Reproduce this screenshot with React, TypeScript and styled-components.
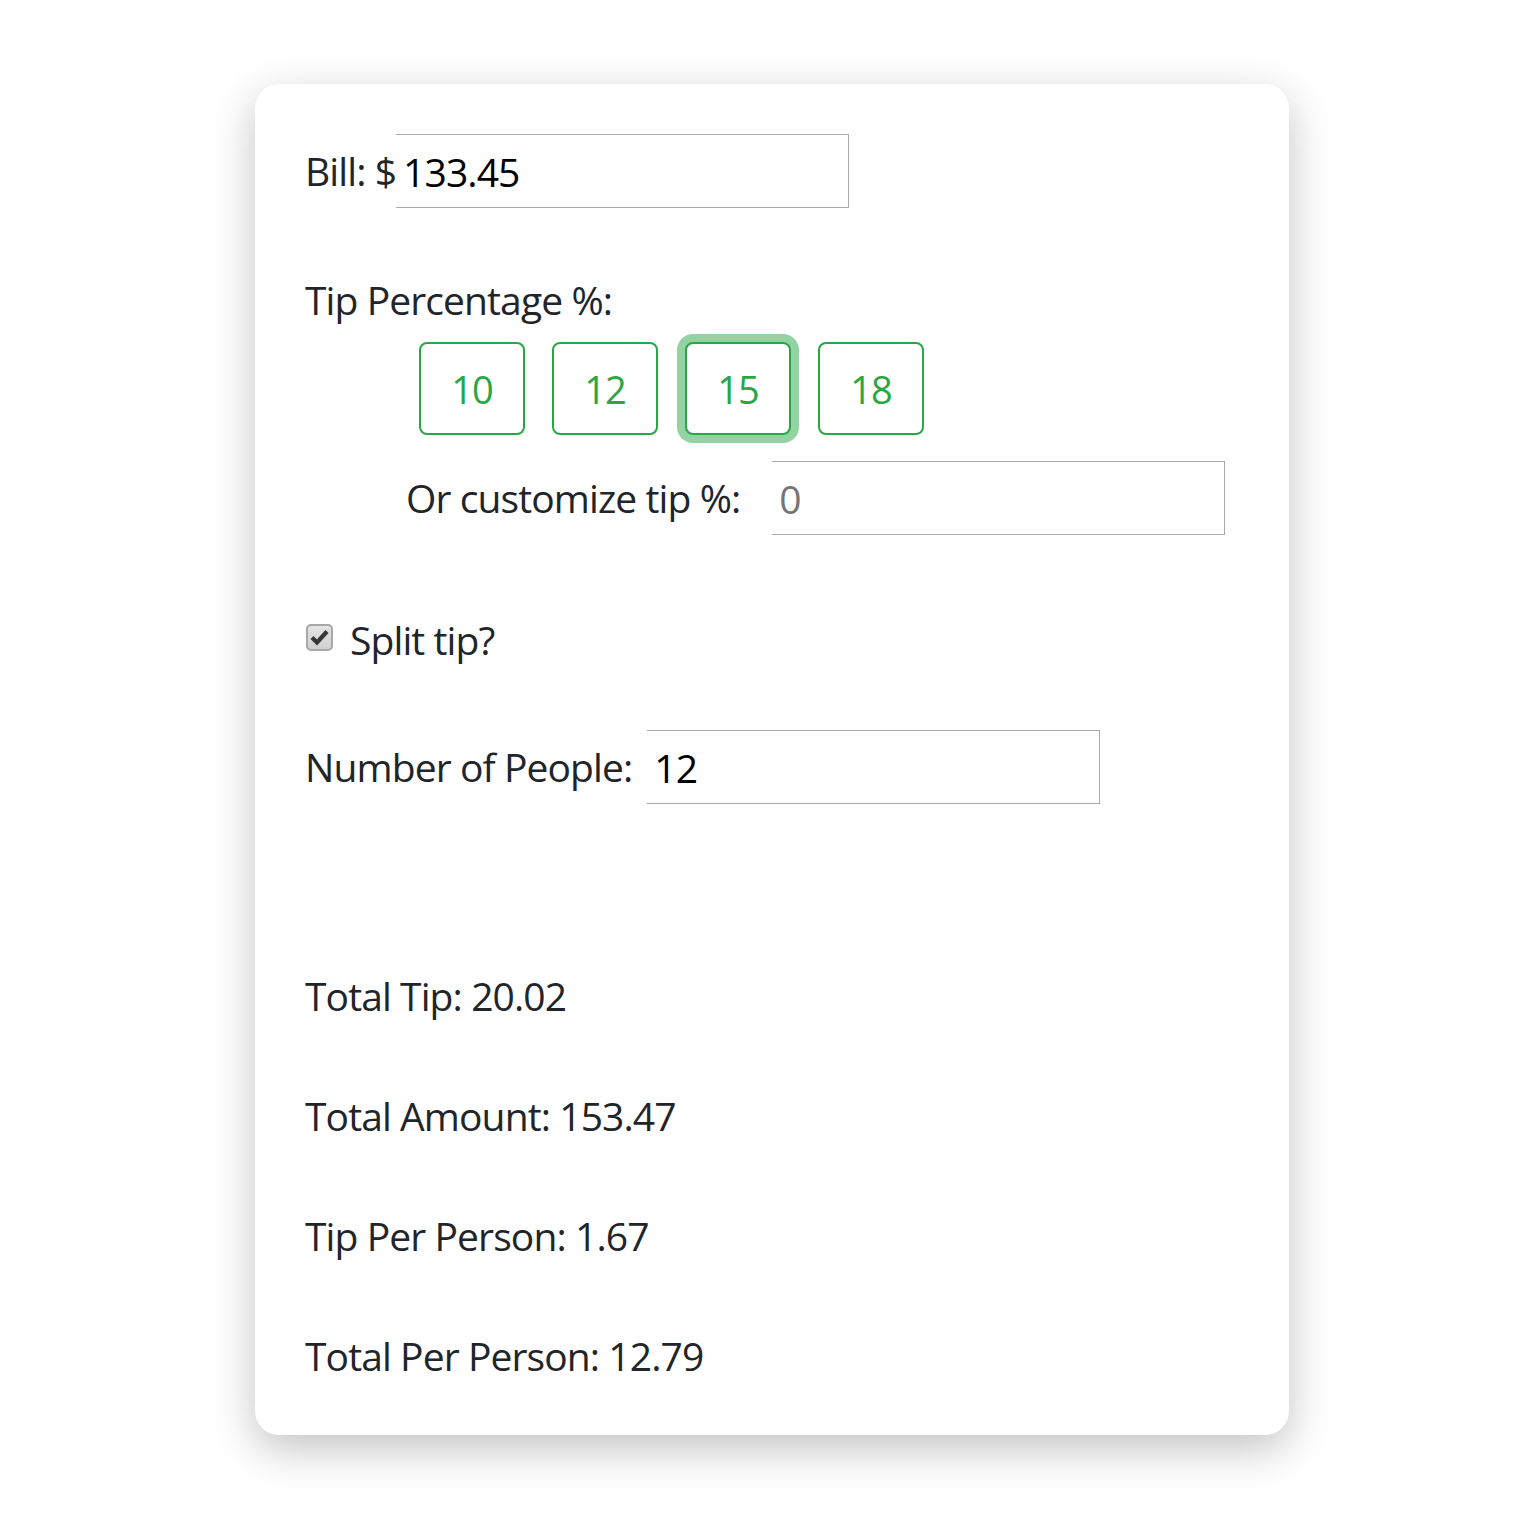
import React, { useState } from 'react';
import styled, { createGlobalStyle } from 'styled-components';

const GlobalStyle = createGlobalStyle`
  body {
    margin: 0;
    min-height: 1515px;
    background: #ffffff;
    font-family: "Open Sans", "Noto Sans", sans-serif;
    color: #212529;
  }
`;

const Card = styled.div`
  box-sizing: border-box;
  width: 1034px;
  min-height: 1350px;
  margin: 84px 0 81px 255px;
  padding: 50px 50px 50px 50px;
  background: #ffffff;
  border-radius: 24px;
  box-shadow: 0 14px 44px rgba(0, 0, 0, 0.24);
  font-size: 39px;
  line-height: 58px;
  letter-spacing: -0.9px;
`;

const Row = styled.div<{ $top?: number; $indent?: number }>`
  display: flex;
  align-items: center;
  margin-top: ${({ $top }) => $top || 0}px;
  padding-left: ${({ $indent }) => $indent || 0}px;
`;

const Label = styled.label<{ $gap?: number }>`
  margin-right: ${({ $gap }) => $gap || 0}px;
  white-space: pre;
`;

const TextInput = styled.input<{ $muted?: boolean }>`
  box-sizing: border-box;
  width: 453px;
  height: 74px;
  padding: 0 7px;
  border: 1px solid #a9a9a9;
  border-left: none;
  font-family: inherit;
  font-size: 39px;
  letter-spacing: -0.9px;
  color: ${({ $muted }) => ($muted ? '#757575' : '#000000')};
  background: #ffffff;
  outline: none;
`;

const Heading = styled.div<{ $top?: number }>`
  margin-top: ${({ $top }) => $top || 0}px;
`;

const TipButtons = styled.div`
  display: flex;
  gap: 27px;
  margin-top: 13px;
  padding-left: 114px;
`;

const TipButton = styled.button<{ $active?: boolean }>`
  box-sizing: border-box;
  width: 106px;
  height: 93px;
  padding: 0;
  border: 2.5px solid #28a745;
  border-radius: 8px;
  background: #ffffff;
  color: #28a745;
  font-family: inherit;
  font-size: 38px;
  letter-spacing: -0.9px;
  line-height: 1;
  cursor: pointer;
  box-shadow: ${({ $active }) => ($active ? '0 0 0 8px rgba(40, 167, 69, 0.5)' : 'none')};
`;

const CheckRow = styled.label`
  display: flex;
  align-items: center;
  gap: 17px;
  margin-top: 76px;
  padding-left: 1px;
`;

const CheckBox = styled.span`
  display: inline-flex;
  align-items: center;
  justify-content: center;
  box-sizing: border-box;
  width: 27px;
  height: 27px;
  border: 2px solid #a8a8a8;
  border-radius: 5px;
  background: linear-gradient(#e4e4e4, #d0d0d0);
  margin-top: -5px;
`;

const Results = styled.div`
  display: flex;
  flex-direction: column;
  gap: 62px;
  margin-top: 163px;
`;

const ResultLine = styled.p`
  margin: 0;
`;

const tips = [10, 12, 15, 18];

export default function App() {
  const [tip, setTip] = useState(15);

  return (
    <>
      <GlobalStyle />
      <Card>
        <Row>
          <Label>Bill: $</Label>
          <TextInput defaultValue="133.45" />
        </Row>

        <Heading $top={63}>Tip Percentage %:</Heading>
        <TipButtons>
          {tips.map(t => (
            <TipButton key={t} $active={t === tip} onClick={() => setTip(t)}>
              {t}
            </TipButton>
          ))}
        </TipButtons>

        <Row $top={26} $indent={101}>
          <Label $gap={32}>Or customize tip %:</Label>
          <TextInput $muted defaultValue="0" />
        </Row>

        <CheckRow>
          <CheckBox>
            <svg width="19" height="17" viewBox="0 0 19 17">
              <path d="M2 8.5 L7 13.5 L17 2.5" fill="none" stroke="#383838" strokeWidth="4.2" strokeLinejoin="miter" strokeLinecap="butt" />
            </svg>
          </CheckBox>
          <span>Split tip?</span>
        </CheckRow>

        <Row $top={61}>
          <Label $gap={15}>Number of People:</Label>
          <TextInput defaultValue="12" />
        </Row>

        <Results>
          <ResultLine>Total Tip: 20.02</ResultLine>
          <ResultLine>Total Amount: 153.47</ResultLine>
          <ResultLine>Tip Per Person: 1.67</ResultLine>
          <ResultLine>Total Per Person: 12.79</ResultLine>
        </Results>
      </Card>
    </>
  );
}
